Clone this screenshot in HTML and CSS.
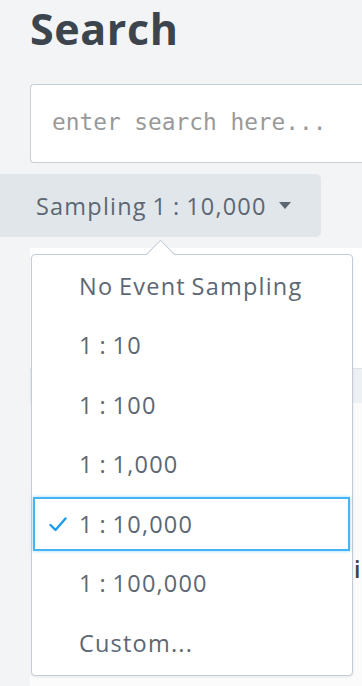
FILE: index.html
```html
<!DOCTYPE html>
<html>
<head>
<meta charset="utf-8">
<link rel="stylesheet" href="styles.css">
</head>
<body>
<div class="page">
  <h1 class="title">Search</h1>
  <div class="search"><span class="placeholder">enter search here...</span></div>
  <div class="sampling">
    <span>Sampling 1 : 10,000</span>
    <svg class="caret" width="12" height="8" viewBox="0 0 12 8"><path d="M0 0 L12 0 L6 7 Z" fill="#5c6773"/></svg>
  </div>
  <div class="results">
    <div class="results-top"></div>
    <div class="results-head"></div>
    <div class="results-body"><span class="peek">i</span></div>
  </div>
  <div class="popover">
    <div class="arrow"></div>
    <ul class="menu">
      <li class="item">No Event Sampling</li>
      <li class="item">1 : 10</li>
      <li class="item">1 : 100</li>
      <li class="item">1 : 1,000</li>
      <li class="item selected">
        <svg class="check" width="18" height="15" viewBox="0 0 18 15"><path d="M1.5 8 L6.5 13 L16.5 1.5" fill="none" stroke="#1a9cf0" stroke-width="2.4" stroke-linecap="round" stroke-linejoin="round"/></svg>
        <span>1 : 10,000</span>
      </li>
      <li class="item">1 : 100,000</li>
      <li class="item">Custom...</li>
    </ul>
  </div>
</div>
</body>
</html>
```
FILE: styles.css
```css
html, body {
  margin: 0;
  padding: 0;
  background: #f2f4f6;
  width: 362px;
  height: 686px;
  overflow: hidden;
}
.page {
  position: relative;
  height: 686px;
  font-family: "Open Sans", Lato, sans-serif;
  color: #5c6773;
}
.title {
  margin: 0;
  padding: 0 0 0 30px;
  height: 80px;
  box-sizing: border-box;
  font-size: 43px;
  font-weight: 700;
  line-height: 58px;
  color: #3c444d;
  letter-spacing: 0.6px;
}
.search {
  margin-left: 30px;
  height: 79px;
  box-sizing: border-box;
  background: #fff;
  border: 1.5px solid #c6ced6;
  border-right: none;
  border-radius: 4px 0 0 4px;
  display: flex;
  align-items: center;
  padding-left: 21px;
  margin-top: 4px;
}
.placeholder {
  font-family: "DejaVu Sans Mono", monospace;
  font-size: 22.8px;
  color: #999;
  margin-top: -4px;
}
.sampling {
  margin-top: 11px;
  width: 321px;
  height: 63px;
  box-sizing: border-box;
  background: #e1e6eb;
  border-radius: 0 5px 5px 0;
  display: flex;
  align-items: center;
  padding-left: 36px;
  gap: 12px;
  font-size: 23.5px;
  letter-spacing: 1.2px;
  word-spacing: -1.5px;
}
.caret { margin-top: 1px; }
.results {
  margin: 11px 0 0 30px;
  background: #fff;
  height: 438px;
  display: flex;
  flex-direction: column;
}
.results-top { height: 120px; }
.results-head {
  height: 34px;
  background: #eef1f4;
  border-top: 1px solid #dde2e7;
}
.results-body {
  flex: 1;
  background: #fbfbfc;
  padding: 150px 0 0 324px;
}
.peek {
  font-size: 23px;
  color: #3c444d;
  font-weight: 600;
}
.popover {
  position: absolute;
  left: 31px;
  top: 254px;
  width: 322px;
  height: 422px;
  box-sizing: border-box;
  background: #fff;
  border: 1.5px solid #c3cbd4;
  border-radius: 4px;
  box-shadow: 0 1px 3px rgba(0,0,0,0.08);
}
.arrow {
  position: absolute;
  left: 118px;
  top: -11px;
  width: 20px;
  height: 20px;
  background: #fff;
  border-top: 1.5px solid #c3cbd4;
  border-left: 1.5px solid #c3cbd4;
  transform: rotate(45deg);
}
.menu {
  position: relative;
  list-style: none;
  margin: 0;
  padding: 1px 0 0;
}
.item {
  height: 59.5px;
  display: flex;
  align-items: center;
  padding-left: 47px;
  font-size: 23.5px;
  letter-spacing: 1.2px;
  word-spacing: -1.5px;
  color: #5c6773;
  box-sizing: border-box;
}
.item.selected {
  height: 54px;
  margin: 3px 2px 2.5px 1px;
  border: 2px solid #45b5f7;
  box-shadow: 0 0 3px rgba(69,181,247,0.6);
  padding-left: 14px;
  gap: 12px;
}
.check { flex: none; }
```
